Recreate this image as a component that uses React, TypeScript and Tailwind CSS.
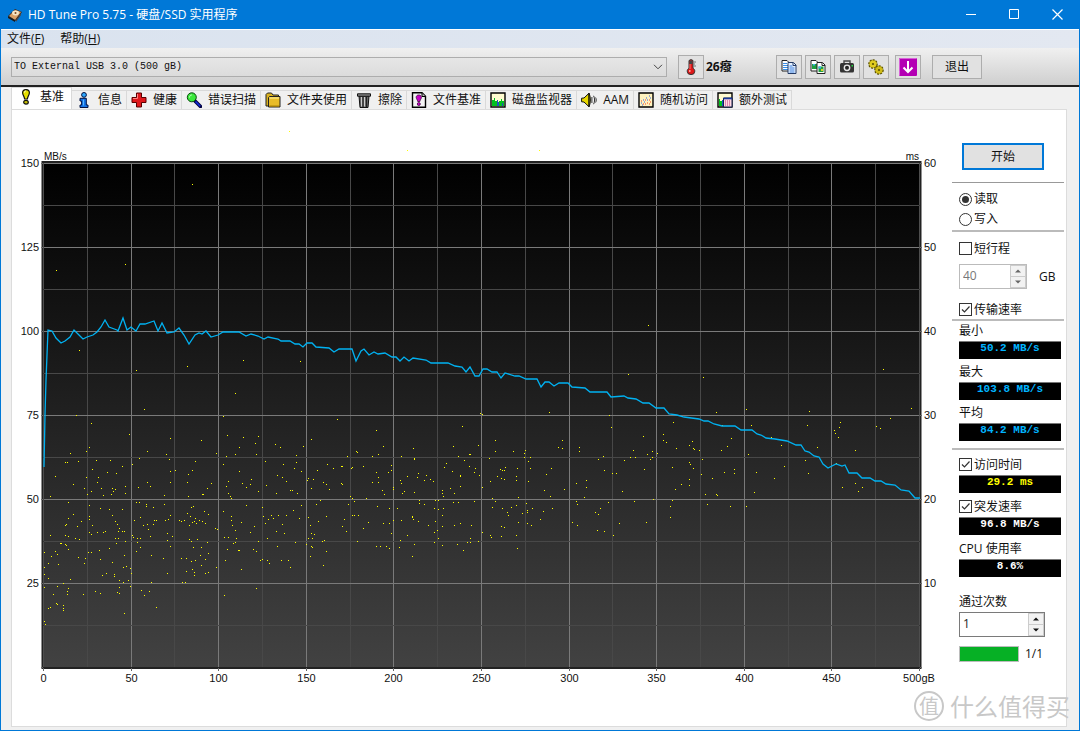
import React, { useState } from 'react';

const uiFont = "font-['Open_Sans','Noto_Sans_CJK_SC',sans-serif]";
const monoFont = "font-['Liberation_Mono','Noto_Sans_CJK_SC',monospace]";

// ---- Icons ----

const DiskIcon = () => (
  <svg viewBox="0 0 16 16" className="w-4 h-4">
    <path d="M1 9 8 2l7 3-6 9z" fill="#3a2a20" />
    <path d="M2 9 8 3l6 2-6 8z" fill="#d9a066" />
    <ellipse cx="8.5" cy="6" rx="3.4" ry="2.4" fill="#f5e6c8" />
    <circle cx="8.5" cy="6" r="1" fill="#7a4a20" />
    <path d="m1 9 7 4v2l-7-4z" fill="#1b1b1b" />
    <path d="m9 13 5-7v2l-5 7z" fill="#4a4a4a" />
  </svg>
);

const BangIcon = () => (
  <svg viewBox="0 0 16 16" className="w-4 h-4">
    <path d="M8 .6c2.200 0 3.400 1.400 3.400 3.200C11.400 6 9.600 7.500 9.400 10H6.600C6.400 7.500 4.600 6 4.600 3.800 4.600 2 5.800.6 8 .6z" fill="#e6e000" stroke="#111" strokeWidth="1.200" />
    <path d="M6.500 3.500c0-1 .5-1.500 1.300-1.500" stroke="#fff" fill="none" />
    <ellipse cx="8" cy="13.200" rx="2.300" ry="1.900" fill="#c8c000" stroke="#111" strokeWidth="1.200" />
  </svg>
);

const InfoIcon = () => (
  <svg viewBox="0 0 16 16" className="w-4 h-4">
    <circle cx="8" cy="2.900" r="2.400" fill="#2ea8ff" stroke="#001040" />
    <path d="M4 6.300h6.300v6.700h1.700v2.500H4V13h1.600V9H4z" fill="#1573e6" stroke="#001040" />
    <path d="M7.500 7.500v6" stroke="#55b8ff" />
  </svg>
);

const CrossIcon = () => (
  <svg viewBox="0 0 16 16" className="w-4 h-4">
    <path d="M5.500 1h5v4.500H15v5h-4.500V15h-5v-4.500H1v-5h4.500z" fill="#e0181c" stroke="#5a0000" />
    <path d="M6.500 2v4.500H2" stroke="#ff8080" fill="none" />
  </svg>
);

const LensIcon = () => (
  <svg viewBox="0 0 16 16" className="w-4 h-4">
    <path d="m9 9 5.500 5.500" stroke="#000040" strokeWidth="3.600" strokeLinecap="round" />
    <path d="m9.500 9.500 4.700 4.700" stroke="#1530e0" strokeWidth="1.600" />
    <circle cx="5.800" cy="5.300" r="4.500" fill="#3be83b" stroke="#0a4a10" />
    <path d="M3.500 5.500c0-1.700 1-2.500 2.300-2.500" stroke="#c8ffc8" fill="none" />
  </svg>
);

const FolderIcon = () => (
  <svg viewBox="0 0 16 16" className="w-4 h-4">
    <path d="M1 14V2.500L2.500 1h4L8 3h5.500v11z" fill="#d8b020" stroke="#222" />
    <path d="M3.500 15V5.500L4.500 4.500H15V15z" fill="#e8bc28" stroke="#222" />
    <path d="M4.500 6h9.500" stroke="#fff3a0" />
    <path d="M4.500 14h9.500" stroke="#a88000" />
  </svg>
);

const TrashIcon = () => (
  <svg viewBox="0 0 16 16" className="w-4 h-4">
    <path d="M3 4h10l-1 11.500H4z" fill="#666" stroke="#111" />
    <path d="M5.500 5v9.500M8.500 5v9.500" stroke="#ccc" />
    <path d="M7 5v10M10.500 5v10" stroke="#222" />
    <path d="M1.500 1.800h13v2.400h-13z" fill="#888" stroke="#111" />
  </svg>
);

const FileBangIcon = () => (
  <svg viewBox="0 0 16 16" className="w-4 h-4">
    <path d="M1.500.8h9.500l3.500 3.400v11H1.500z" fill="#f4f4f4" stroke="#000" strokeWidth="1.400" />
    <path d="M11 1v3.500h3.500" fill="#bbb" stroke="#000" />
    <path d="M7.800 3c1.700 0 2.600 1 2.600 2.300 0 1.700-1.300 2.300-1.500 4.200H6.700C6.500 7.600 5.200 7 5.200 5.300 5.200 4 6.100 3 7.800 3z" fill="#c800c8" stroke="#400040" strokeWidth=".8" />
    <circle cx="7.800" cy="12" r="1.500" fill="#c800c8" stroke="#400040" strokeWidth=".8" />
  </svg>
);

const MonitorIcon = () => (
  <svg viewBox="0 0 16 16" className="w-4 h-4">
    <path d="M1 1h14v14H1z" fill="#fffbd0" stroke="#000" strokeWidth="1.400" />
    <path d="M2 14V8h2V6h1v3h2v5zM9 14V9h2V7h1v2h2v5z" fill="#00c020" />
    <path d="M7 14V8h1v2h1v4zM12 14v-3h1v3z" fill="#2050c0" />
  </svg>
);

const SpeakerIcon = () => (
  <svg viewBox="0 0 16 16" className="w-4 h-4">
    <path d="M.6 6.200 3 6l5-4.800v13.600L3 10 .6 9.800z" fill="#e8d800" stroke="#111" />
    <path d="M8 1.200c1.800 3.500 1.800 10 0 13.600z" fill="#a89c00" stroke="#111" />
    <path d="M10.900 5v6M12.600 3.800c1.300 2.500 1.300 5.900 0 8.400M14.600 5.500c.8 1.600.8 3.400 0 5" stroke="#333" fill="none" />
  </svg>
);

const RandomIcon = () => (
  <svg viewBox="0 0 16 16" className="w-4 h-4">
    <path d="M1 1h14v14H1z" fill="#fff3c0" stroke="#000" strokeWidth="1.400" />
    <path d="M3 11h1M5 8h1M6 10h1M8 6h1M9 8h1M11 4h1M12 6h1M4 13h1" stroke="#3060e0" />
    <path d="M3 9h1M5 12h1M7 12h1M9 11h1M11 8h1M11 12h1M12 10h1M7 8h1" stroke="#f04020" />
  </svg>
);

const ExtraIcon = () => (
  <svg viewBox="0 0 16 16" className="w-4 h-4">
    <path d="M1 1h14v14H1z" fill="#fffbd0" stroke="#000" strokeWidth="1.400" />
    <path d="M2 14V7h1v2h2v5z" fill="#00c020" />
    <path d="M5 14V8h1v6z" fill="#2050c0" />
    <path d="M6.500 6h8.500v9H6.500z" fill="#ffd8e0" stroke="#102050" />
    <path d="M6.500 6.500h8.500" stroke="#1a3a9a" strokeWidth="1.600" />
    <path d="M8 9h1m1 0h1m1 0h1M8 11h1m1 0h1m1 0h1M8 13h1m1 0h1m1 0h1" stroke="#c03080" />
  </svg>
);

const ThermometerIcon = () => (
  <svg viewBox="0 0 16 16" className="w-4 h-4">
    <path d="M6 1.500 8 .6l2 .9v7.800c1.200.7 1.800 1.700 1.800 2.900a3.700 3.300 0 0 1-7.600 0c0-1.200.6-2.200 1.800-2.900z" fill="#e01818" stroke="#333" />
    <path d="M6.500 1.500h3V5h-3z" fill="#444" />
    <path d="M7 5v5" stroke="#ff7070" />
    <path d="M11 3h2M11 5h1M11 7h2" stroke="#555" strokeWidth=".8" />
    <circle cx="6.800" cy="12" r=".9" fill="#ffb0b0" />
  </svg>
);

const CopyTextIcon = () => (
  <svg viewBox="0 0 16 16" className="w-4 h-4">
    <path d="M1 1.500h5l2 2V12H1z" fill="#fff" stroke="#222" />
    <path d="M2 4.500h4M2 6.500h5M2 8.500h5M2 10.500h5" stroke="#3a90e8" />
    <path d="M7 3.500h5.500L15 6v8.500H7z" fill="#e8f2ff" stroke="#223a66" />
    <path d="M12 4v2.500h3" fill="none" stroke="#223a66" />
    <path d="M8.500 7h3M8.500 9h5M8.500 11h5M8.500 13h5" stroke="#3a80e0" />
  </svg>
);

const CopyImageIcon = () => (
  <svg viewBox="0 0 16 16" className="w-4 h-4">
    <path d="M1 1.500h5l2 2V12H1z" fill="#fff" stroke="#222" />
    <path d="M2 5h5v5H2z" fill="#20a040" />
    <path d="M7 3.500h5.500L15 6v8.500H7z" fill="#fff" stroke="#222" />
    <path d="M12 4v2.500h3" fill="none" stroke="#222" />
    <path d="M8.500 7.500h5v5.500h-5z" fill="#20a040" />
    <path d="M8.500 7.500h2.500v2H8.500zM3 5h2v1.500H3z" fill="#40b0f0" />
    <path d="M11 10h2v2h-2z" fill="#e0d020" />
  </svg>
);

const CameraIcon = () => (
  <svg viewBox="0 0 16 16" className="w-4 h-4">
    <path d="M5 4V2h6v2" fill="none" stroke="#444" strokeWidth="1.400" />
    <rect x="1" y="4" width="14" height="9.500" rx="1.500" fill="#333" />
    <circle cx="8" cy="8.800" r="3.400" fill="#e8e8e8" />
    <circle cx="8" cy="8.800" r="2" fill="#222" />
    <path d="M12.500 6h1.500v1.500h-1.500z" fill="#20e040" />
  </svg>
);

const GearsIcon = () => (
  <svg viewBox="0 0 16 16" className="w-4 h-4">
    <circle cx="5" cy="5" r="4" fill="#d8c820" stroke="#5a5000" strokeWidth="1.600" strokeDasharray="2 1" />
    <circle cx="5" cy="5" r="3.500" fill="#e0cc20" />
    <circle cx="5" cy="5" r="1.100" fill="#5a5000" />
    <circle cx="11" cy="11" r="4" fill="#d8c820" stroke="#5a5000" strokeWidth="1.600" strokeDasharray="2 1" />
    <circle cx="11" cy="11" r="3.500" fill="#d0bc18" />
    <circle cx="11" cy="11" r="1.100" fill="#5a5000" />
  </svg>
);

const DownloadIcon = () => (
  <svg viewBox="0 0 18 18" className="w-[18px] h-[18px]">
    <rect width="18" height="18" rx="1" fill="#b400b4" />
    <path d="M.5 17.500V.5h17" stroke="#d860d8" fill="none" />
    <path d="M9 3v11M4.500 9.500 9 14l4.500-4.500" stroke="#fff" strokeWidth="2" fill="none" />
  </svg>
);

// ---- Chart data ----

const transferLine =
  '44,467 45,415 46,380 48,330 52,331 56,338 61,343 65,341 70,337 74,330 79,335 83,339 87,337 93,335 97,332 101,327 105,320 109,327 117,330 118,331 123,318 127,330 131,327 136,331 140,324 145,324 154,321 158,331 162,323 167,333 174,332 179,328 184,335 189,344 195,335 199,333 202,334 206,331 211,337 218,335 223,332 239,332 246,336 251,334 258,336 264,339 268,337 278,339 281,341 290,341 295,344 299,344 303,347 307,343 312,343 316,347 329,348 334,352 339,349 352,349 356,361 361,351 364,349 369,355 374,352 378,354 385,353 392,357 396,357 400,361 404,357 409,361 413,358 426,360 431,363 448,363 455,366 462,367 466,372 470,367 475,376 479,376 483,369 487,369 492,372 497,372 501,378 505,373 515,376 519,376 526,379 537,379 541,387 545,382 549,382 554,386 559,383 568,383 572,387 585,388 590,392 607,392 611,397 624,396 628,398 636,399 643,403 649,403 656,408 664,408 669,414 677,415 684,417 699,419 704,421 708,421 714,424 722,426 735,426 741,430 752,430 757,434 761,435 766,438 775,439 787,441 796,445 801,445 805,451 809,452 814,456 819,457 823,464 828,468 836,464 842,466 845,465 849,473 857,473 862,478 870,478 875,481 881,481 886,484 895,485 901,490 909,491 915,498 920,498';

const accessDots = `
289,131 407,150 539,150 56,270 125,264 192,184 79,350 136,370 187,366 243,360 300,361 235,393 144,409 76,415 91,423 223,416 337,419
129,434 170,438 201,440 227,435 243,437 258,436 89,447 86,451 70,453 147,451 166,454 216,453 239,447 255,443 275,444 280,447 303,446 311,439
65,462 67,462 78,461 96,460 110,460 122,466 132,464 139,458 169,459 195,461 226,456 235,454 256,454 296,455 347,456 356,451 55,476 107,472
92,469 116,473 170,471 175,470 188,474 192,470 223,464 239,471 265,461 283,464 296,462 294,468 301,471 317,470 327,464 333,468 341,466 351,468
73,484 86,477 98,477 97,482 84,488 101,488 112,488 115,489 125,486 138,487 150,486 147,482 170,482 187,482 211,483 207,488 202,494 228,481
242,483 251,479 250,484 246,487 226,486 266,485 258,491 277,475 282,477 286,481 307,480 308,478 313,479 323,482 326,484 329,489 341,483 311,488
276,493 290,490 292,490 297,493 50,496 91,491 113,491 111,494 87,494 103,495 125,493 164,495 188,496 203,494 228,493 230,496 231,498 350,496
68,502 89,505 100,508 136,502 139,502 146,504 146,506 153,507 164,504 109,509 122,509 112,515 89,516 89,519 115,521 117,524 119,528 68,518
66,524 65,525 81,521 77,526 92,525 73,514 134,520 140,517 154,520 156,520 165,520 168,519 170,515 143,525 147,524 153,524 148,529 179,520
181,521 184,520 191,507 193,506 204,511 187,513 190,516 195,518 208,514 189,525 192,522 194,521 196,523 199,520 202,521 205,523 223,511 231,516
231,520 241,522 232,525 215,528 217,529 235,530 246,505 262,507 263,516 271,515 268,519 273,518 278,515 286,515 265,523 282,524 254,526 301,505
316,504 320,500 293,510 299,518 308,517 318,521 310,525 326,516 97,532 103,532 105,531 89,532 91,534 118,531 122,531 124,531 50,535 65,535
68,536 79,539 75,538 61,543 60,543 65,544 66,545 68,549 115,538 118,538 116,543 125,541 132,535 133,537 137,538 140,538 137,542 150,536
167,533 172,536 167,540 189,539 191,541 197,539 207,542 224,537 228,537 236,538 250,532 276,531 284,533 233,543 235,542 258,541 267,538 295,542
306,544 311,533 314,534 308,538 312,538 322,541 324,540 277,546 311,546 312,547 109,548 140,547 170,546 193,547 201,547 227,549 239,550 238,550
253,549 256,551 326,551 51,556 55,551 57,554 88,552 91,552 99,550 78,557 85,558 84,563 100,559 124,555 136,551 151,555 163,558 181,558
186,558 191,561 195,560 200,555 205,559 208,553 225,560 260,560 262,559 267,560 269,563 281,560 288,560 290,567 310,556 323,565 48,563 58,564
44,552 44,567 112,562 123,567 126,566 130,568 201,565 192,569 216,567 241,569 44,574 48,578 70,579 102,575 106,573 114,576 114,574 119,580
131,573 167,573 186,571 194,575 194,572 205,573 208,572 63,583 57,586 44,587 68,588 67,591 67,594 53,594 83,594 95,591 100,593 119,587
117,592 119,593 123,582 128,580 130,586 141,590 149,591 144,595 151,582 182,582 185,582 224,595 256,588 57,604 56,603 48,608 50,607 63,605
63,608 63,610 124,613 156,607 44,621 45,624
628,374 480,413 482,414 549,412 609,415 611,427 462,426 376,430 495,440 562,440 478,445 383,446 453,446 413,448 558,447 562,448 579,447 579,451
357,452 495,451 513,451 524,453 525,450 378,454 401,456 458,456 469,454 470,454 524,457 530,457 603,456 372,456 414,458 414,459 489,458 598,459
342,466 352,467 363,466 391,465 391,470 464,460 446,463 444,467 528,461 624,460 630,457 635,457 469,466 475,468 474,472 517,468 530,468 551,468
604,470 376,472 388,472 418,473 426,475 407,476 417,477 452,471 500,469 505,467 502,470 504,470 497,476 516,476 546,474 612,473 616,473 378,477
460,475 460,476 479,475 501,478 504,479 516,480 400,480 401,483 424,480 430,479 433,481 490,481 528,481 586,480 576,483 342,484 372,482 378,482
393,487 393,489 460,486 450,488 482,487 442,490 442,493 454,493 414,492 404,491 402,493 382,490 384,494 544,490 564,489 586,487 622,491 550,496
518,497 584,497 443,496 352,498 366,498 492,498 354,501 419,500 419,503 435,500 438,500 453,502 458,502 474,501 495,501 576,501 577,504 608,502
348,504 424,504 377,506 389,508 397,508 434,508 438,509 443,508 492,507 511,507 502,508 516,505 526,503 527,510 527,512 532,508 552,508 543,511
600,508 595,512 598,514 507,512 508,515 522,513 352,515 354,515 358,515 412,517 413,519 412,516 442,515 344,519 540,519 368,522 383,523 389,523
393,520 401,520 418,521 435,521 460,523 518,522 527,523 531,525 572,522 619,523 342,526 428,525 454,525 442,526 471,525 501,526 504,527 577,525
363,528 346,531 391,533 437,530 434,532 482,532 597,530 604,531 407,535 438,538 400,540 470,538 490,535 491,537 501,536 516,535 613,535 357,541
434,542 467,542 470,542 478,541 376,546 380,546 386,546 389,548 399,547 414,544 457,544 442,545 463,550 517,548 412,556
648,325 703,377 883,369 716,412 746,409 809,411 911,408 890,418 673,422 722,425 751,425 807,425 840,422 839,427 834,430 835,433 838,437 876,426
880,428 643,436 663,434 663,440 666,442 731,438 771,437 692,441 689,445 693,448 694,449 676,448 699,450 633,450 647,454 652,451 657,453 650,459
652,457 781,445 727,446 721,450 817,447 855,450 748,454 702,459 805,460 836,463 784,466 672,467 689,462 690,464 693,468 644,469 734,469 734,473
724,472 701,474 756,472 808,473 712,478 774,478 689,479 681,484 689,485 675,489 855,483 862,487 842,487 858,491 754,492 705,494 716,494 717,495
653,499 707,504 672,500 634,501 670,506 730,506 746,506 670,517 646,522
`;

const dotPath = accessDots
  .trim()
  .split(/\s+/)
  .map(p => `M${p.replace(',', ' ')}h1v1h-1z`)
  .join('');

const steps = (n: number) => Array.from({ length: n + 1 }, (_, i) => i);

const BenchmarkChart: React.FC = () => {
  // plot area: 44..920 x 163..667
  const px = (i: number) => Math.round(43 + i * 43.8) + 0.5;
  const py = (i: number) => 163.5 + i * 42;

  return (
    <svg viewBox="12 110 930 577" className="block w-full font-['Liberation_Sans',sans-serif] text-[11px]" role="img">
      <defs>
        <linearGradient id="plotBg" x1="0" y1="0" x2="0" y2="1">
          <stop offset="0" stopColor="#000" />
          <stop offset="1" stopColor="#424242" />
        </linearGradient>
      </defs>
      <rect x="42" y="162" width="879" height="507" fill="url(#plotBg)" />
      {steps(20).map(i => (
        <path key={i} d={`M${px(i)} 163V668`} stroke={i % 2 ? '#484848' : '#7a7a7a'} />
      ))}
      {steps(12).map(i => (
        <path key={i} d={`M43 ${py(i)}H920`} stroke={i % 2 ? '#484848' : '#7a7a7a'} />
      ))}
      <rect x="42.5" y="162" width="878" height="506" fill="none" stroke="#222" strokeWidth="2" />
      {steps(10).map(i => (
        <path key={i} d={`M${px(i * 2)} 668v3`} stroke="#666" />
      ))}
      {steps(6).map(i => (
        <path key={i} d={`M41 ${py(i * 2)}h2M920 ${py(i * 2)}h2`} stroke="#666" />
      ))}
      <path d={dotPath} fill="#ffff00" shapeRendering="crispEdges" />
      <polyline points={transferLine} fill="none" stroke="#00b2f2" strokeWidth="1.300" />

      <g fill="#111">
        <text x="44" y="160" className="text-[10px]">MB/s</text>
        <text x="919" y="160" textAnchor="end" className="text-[10px]">ms</text>
        {[150, 125, 100, 75, 50, 25].map((v, i) => (
          <text key={v} x="39" y={167 + i * 84} textAnchor="end">{v}</text>
        ))}
        {[60, 50, 40, 30, 20, 10].map((v, i) => (
          <text key={v} x="924" y={167 + i * 84}>{v}</text>
        ))}
        {steps(10).map(i => (
          <text key={i} x={i === 10 ? 919 : px(i * 2)} y="682" textAnchor="middle">
            {i === 10 ? '500gB' : i * 50}
          </text>
        ))}
      </g>
    </svg>
  );
};

// ---- Controls ----

interface ToggleProps {
  label: string;
  defaultChecked?: boolean;
}

const CheckRow: React.FC<ToggleProps> = ({ label, defaultChecked }) => (
  <label className="flex items-center gap-0.5 h-[19px] leading-[19px]">
    <span className="relative w-[13px] h-[13px]">
      <input type="checkbox" defaultChecked={defaultChecked} className="peer block appearance-none w-[13px] h-[13px] border border-[#333] bg-white" />
      <svg viewBox="0 0 13 13" className="absolute inset-0 hidden peer-checked:block pointer-events-none">
        <path d="m3 6.500 2.500 2.500 5-5.500" fill="none" stroke="#333" strokeWidth="1.200" />
      </svg>
    </span>
    {label}
  </label>
);

const RadioRow: React.FC<ToggleProps> = ({ label, defaultChecked }) => (
  <label className="flex items-center gap-0.5 h-5">
    <span className="relative w-[13px] h-[13px]">
      <input type="radio" name="mode" defaultChecked={defaultChecked} className="peer block appearance-none w-[13px] h-[13px] rounded-full border border-[#333] bg-white" />
      <span className="absolute inset-[3px] rounded-full bg-[#333] hidden peer-checked:block pointer-events-none" />
    </span>
    {label}
  </label>
);

const Readout: React.FC<{ value: string; color: string }> = ({ value, color }) => (
  <output className={`block mt-px h-[18px] w-[102px] bg-black border-t border-[#777] text-center text-[11px] leading-[13px] font-bold ${monoFont} ${color}`}>
    {value}
  </output>
);

interface SpinnerProps {
  label: string;
  value: number;
  disabled?: boolean;
  width: string;
}

const Spinner: React.FC<SpinnerProps> = ({ label, value: initial, disabled, width }) => {
  const [value, setValue] = useState(initial);
  const arrow = disabled ? '#666' : '#111';
  return (
    <div className={`flex h-[25px] border ${disabled ? 'border-[#bbb]' : 'border-[#7a7a7a]'} ${width}`}>
      <input
        aria-label={label}
        value={value}
        disabled={disabled}
        onChange={e => setValue(Number(e.target.value) || 0)}
        className={`flex-1 min-w-0 pl-[3px] pb-0.5 bg-white ${disabled ? 'text-[#777]' : 'text-[#222]'}`}
      />
      <div className="flex flex-col w-4 gap-px bg-[#ccc] p-px">
        <button aria-label="+" disabled={disabled} onClick={() => setValue(value + 1)} className="flex-1 flex items-center justify-center bg-[#f2f2f2]">
          <svg viewBox="0 0 6 4" className="w-1.5 h-1"><path d="m0 3.500 3-3 3 3z" fill={arrow} /></svg>
        </button>
        <button aria-label="-" disabled={disabled} onClick={() => setValue(value - 1)} className="flex-1 flex items-center justify-center bg-[#f2f2f2]">
          <svg viewBox="0 0 6 4" className="w-1.5 h-1"><path d="m0 .5 3 3 3-3z" fill={arrow} /></svg>
        </button>
      </div>
    </div>
  );
};

const ToolButton: React.FC<{ title: string; className?: string; children: React.ReactNode }> = ({ title, className = '', children }) => (
  <button aria-label={title} className={`flex items-center justify-center w-[26px] h-6 bg-[#e1e1e1] border border-[#adadad] ${className}`}>
    {children}
  </button>
);

const tabs = [
  { label: '基准', icon: <BangIcon /> },
  { label: '信息', icon: <InfoIcon /> },
  { label: '健康', icon: <CrossIcon /> },
  { label: '错误扫描', icon: <LensIcon /> },
  { label: '文件夹使用', icon: <FolderIcon /> },
  { label: '擦除', icon: <TrashIcon /> },
  { label: '文件基准', icon: <FileBangIcon /> },
  { label: '磁盘监视器', icon: <MonitorIcon /> },
  { label: 'AAM', icon: <SpeakerIcon /> },
  { label: '随机访问', icon: <RandomIcon /> },
  { label: '额外测试', icon: <ExtraIcon /> },
];

const Sidebar: React.FC = () => (
  <aside className="w-[124px] shrink-0 pt-[33px] pl-2.5 pr-0.5">
    <button className="block ml-2.5 w-[82px] h-[27px] bg-[#e1e1e1] border-2 border-[#0078d7]">开始</button>
    <hr className="mt-3 border-t border-[#999]" />
    <div className="mt-1.5 pl-[7px]">
      <RadioRow label="读取" defaultChecked />
      <RadioRow label="写入" />
    </div>
    <hr className="mt-px border-t-2 border-[#bbb]" />
    <div className="pt-[7px] pl-[7px]">
      <CheckRow label="短行程" />
      <div className="flex items-center mt-1.5 gap-3">
        <Spinner label="短行程" value={40} disabled width="w-[68px]" />
        <span>GB</span>
      </div>
      <div className="mt-[11px]">
        <CheckRow label="传输速率" defaultChecked />
      </div>
    </div>
    <hr className="border-t-2 border-[#bbb]" />
    <div className="flex flex-col gap-[3px] pl-[7px]">
      <div>
        <div className="h-[19px] leading-[19px]">最小</div>
        <Readout value="50.2 MB/s" color="text-[#00b4ff]" />
      </div>
      <div>
        <div className="h-[19px] leading-[19px]">最大</div>
        <Readout value="103.8 MB/s" color="text-[#00b4ff]" />
      </div>
      <div>
        <div className="h-[19px] leading-[19px]">平均</div>
        <Readout value="84.2 MB/s" color="text-[#00b4ff]" />
      </div>
    </div>
    <hr className="mt-[7px] border-t-2 border-[#bbb]" />
    <div className="flex flex-col gap-1 pt-[5px] pl-[7px]">
      <div>
        <CheckRow label="访问时间" defaultChecked />
        <Readout value="29.2 ms" color="text-[#ffff00]" />
      </div>
      <div>
        <CheckRow label="突发速率" defaultChecked />
        <Readout value="96.8 MB/s" color="text-white" />
      </div>
      <div>
        <div className="h-[19px] leading-[19px]">CPU 使用率</div>
        <Readout value="8.6%" color="text-white" />
      </div>
    </div>
    <div className="mt-[15px] pl-[7px]">
      <div className="h-5 leading-5">通过次数</div>
      <Spinner label="通过次数" value={1} width="w-[86px]" />
      <div className="flex items-center gap-1.5 mt-[9px] h-4">
        <div className="w-[60px] h-full bg-[#06b025] border border-[#bcbcbc]" />
        <span>1/1</span>
      </div>
    </div>
  </aside>
);

const App: React.FC = () => {
  const [active, setActive] = useState(0);

  return (
    <div className={`relative overflow-hidden min-h-screen flex flex-col bg-[#f0f0f0] border border-t-0 border-[#0078d7] text-xs text-[#111] ${uiFont}`}>
      <header className="flex items-center h-[29px] pl-1.5 bg-[#0078d7] text-white">
        <DiskIcon />
        <h1 className="flex-1 pl-[5px]">HD Tune Pro 5.75 - 硬盘/SSD 实用程序</h1>
        <button aria-label="最小化" className="w-[43px] h-full flex items-center justify-center">
          <svg viewBox="0 0 11 11" className="w-[11px] h-[11px]"><path d="M0 5.500h10" stroke="#fff" /></svg>
        </button>
        <button aria-label="最大化" className="w-[43px] h-full flex items-center justify-center">
          <svg viewBox="0 0 11 11" className="w-[11px] h-[11px]"><path d="M.5.500h9v9h-9z" fill="none" stroke="#fff" /></svg>
        </button>
        <button aria-label="关闭" className="w-[43px] h-full flex items-center justify-center">
          <svg viewBox="0 0 11 11" className="w-[11px] h-[11px]"><path d="m.5.500 10 10m0-10-10 10" stroke="#fff" strokeWidth="1.200" /></svg>
        </button>
      </header>

      <nav className="flex items-center h-[19px] pl-1.5 gap-4 bg-linear-to-r from-[#dae3ef] to-[#e3e8f1] border-t border-white">
        <button>文件(<u>F</u>)</button>
        <button>帮助(<u>H</u>)</button>
      </nav>

      <div className="flex items-center h-[39px] pl-2.5 pr-[97px] bg-linear-to-b from-[#f0f0f0] to-[#cfcfcf] border-b-2 border-[#222]">
        <div className="relative flex-1 h-5">
          <select aria-label="驱动器" className={`block appearance-none w-full h-full pl-0.5 border border-[#adadad] bg-linear-to-b from-[#e6e6e6] to-[#dcdcdc] text-[10px] ${monoFont}`}>
            <option>TO External USB 3.0 (500 gB)</option>
          </select>
          <svg viewBox="0 0 10 6" className="absolute right-1 top-[7px] w-2.5 h-1.5 pointer-events-none">
            <path d="m1 .8 4 4 4-4" fill="none" stroke="#444" />
          </svg>
        </div>
        <ToolButton title="温度" className="ml-[11px]"><ThermometerIcon /></ToolButton>
        <span className="w-[72px] pl-0.5 text-xs font-bold">26癈</span>
        <div className="flex gap-[3px]">
          <ToolButton title="复制文本"><CopyTextIcon /></ToolButton>
          <ToolButton title="复制图像"><CopyImageIcon /></ToolButton>
          <ToolButton title="截图"><CameraIcon /></ToolButton>
          <ToolButton title="选项"><GearsIcon /></ToolButton>
        </div>
        <ToolButton title="保存" className="ml-1.5"><DownloadIcon /></ToolButton>
        <button className="ml-[11px] w-[50px] h-6 bg-[#e1e1e1] border border-[#adadad]">退出</button>
      </div>

      <div role="tablist" className="flex items-end h-[22px] pl-2.5">
        {tabs.map((tab, i) => (
          <button
            key={tab.label}
            role="tab"
            aria-selected={i === active}
            onClick={() => setActive(i)}
            className={`flex items-center gap-1.5 border-t border-r border-[#d9d9d9] whitespace-nowrap ${
              i === active ? 'h-[22px] pl-1.5 pr-[7px] pb-1 border-l bg-white' : 'h-[19px] px-1 bg-[#f0f0f0]'
            }`}
          >
            {tab.icon}
            {tab.label}
          </button>
        ))}
      </div>

      <main className="flex-1 flex items-start ml-2.5 mr-3 mb-[3px] bg-white border border-[#dcdcdc]">
        <div className="flex-1 min-w-0">
          <BenchmarkChart />
        </div>
        <Sidebar />
      </main>

      <div className="absolute right-[9px] bottom-2 flex items-center gap-1.5 text-[#c8c8c8] pointer-events-none font-['Noto_Sans_CJK_SC',sans-serif]">
        <span className="flex items-center justify-center w-[30px] h-[30px] rounded-full border-2 border-[#c8c8c8] text-xl leading-none">值</span>
        <span className="text-2xl leading-8 whitespace-nowrap">什么值得买</span>
      </div>
    </div>
  );
};

export default App;
